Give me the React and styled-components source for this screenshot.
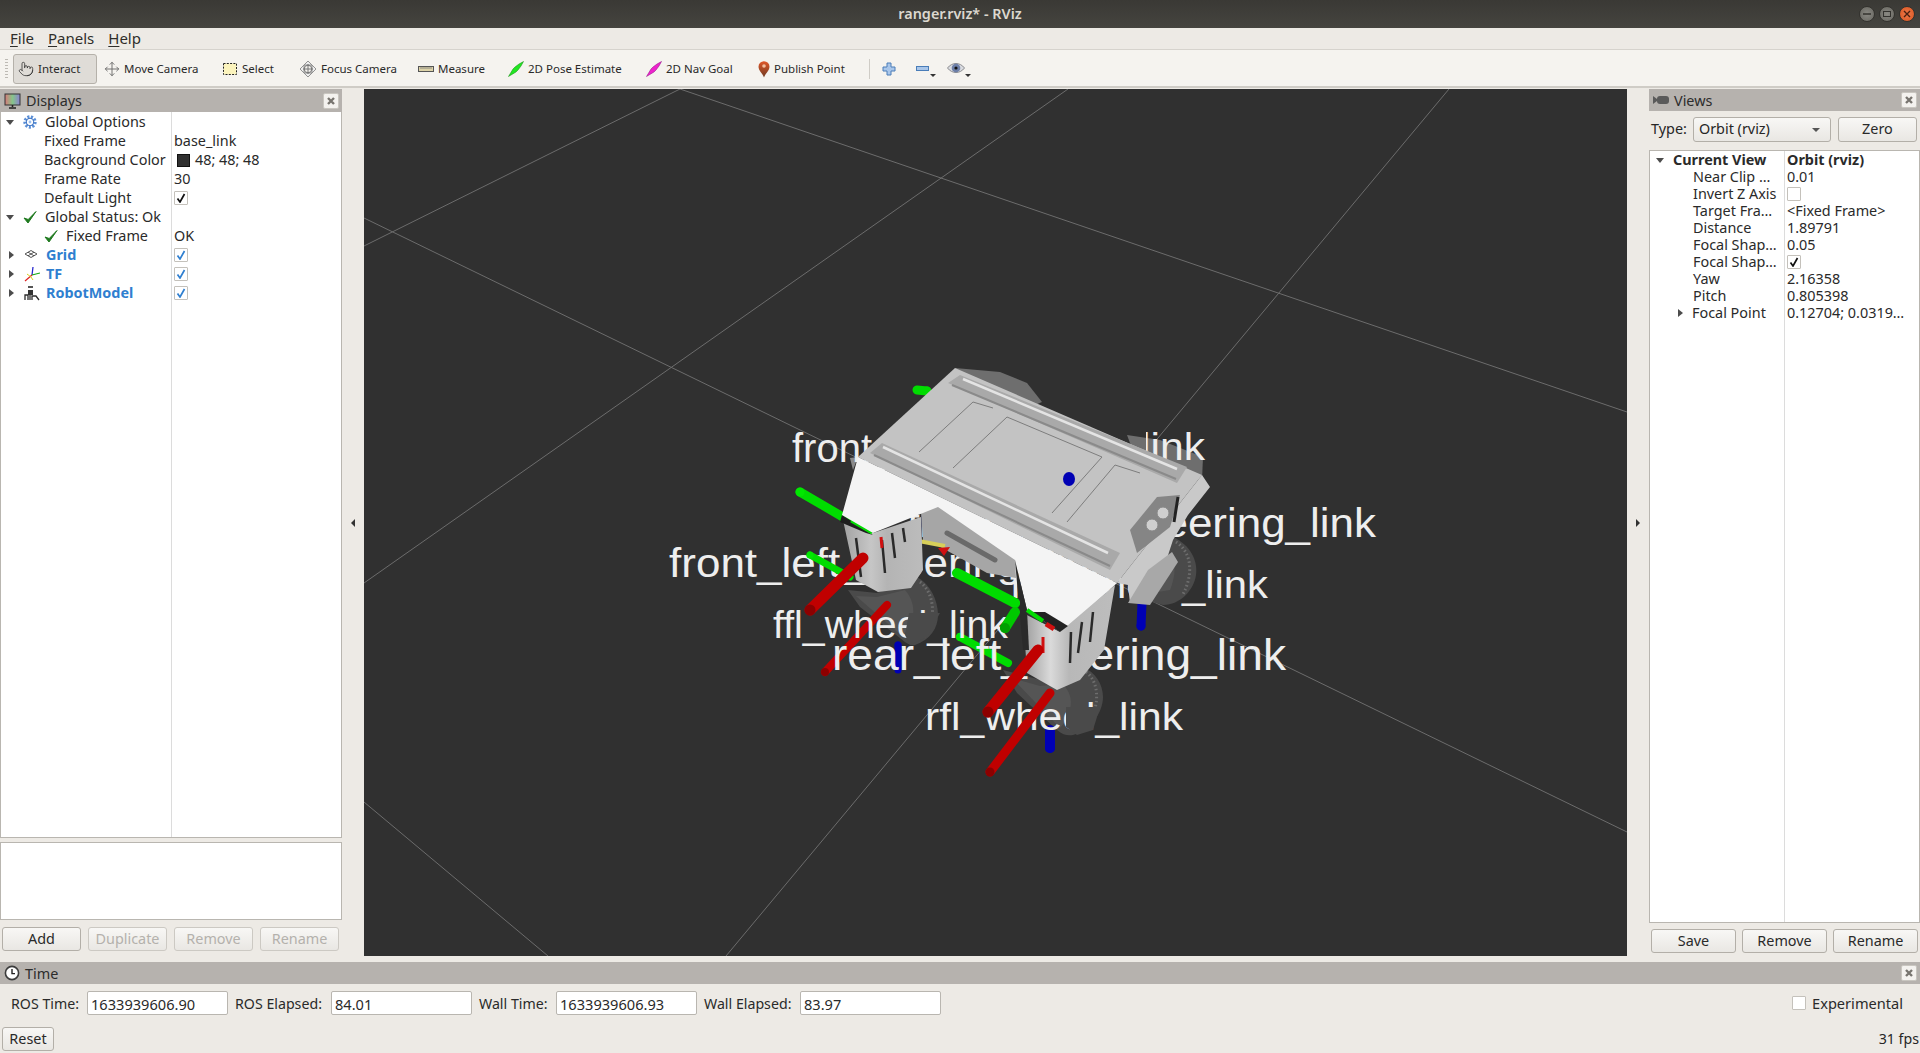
import React from "react";
import styled, { createGlobalStyle } from "styled-components";
import { Pointer, Move } from "lucide-react";

const UI = `"Noto Sans", "Open Sans", sans-serif`;
const Global = createGlobalStyle`
  html, body { margin: 0; padding: 0; height: 100%; overflow: hidden; background: #edeae5; }
  * { box-sizing: border-box; }
`;
const Page = styled.div`
  width: 1920px; height: 1053px; display: flex; flex-direction: column;
  background: #edeae5; color: #262626; font: 14.4px/1 ${UI}; overflow: hidden;
`;
const TitleBar = styled.header`
  height: 28px; flex: none; display: flex; align-items: center; justify-content: center; position: relative;
  background: linear-gradient(#3a3935, #45443f);
  color: #dcd8cf; font-weight: 600; font-size: 14.4px;
`;
const WinButtons = styled.div`
  position: absolute; right: 5px; top: 6px; display: flex; gap: 4px;
`;
const WinBtn = styled.div`
  width: 16px; height: 16px; border-radius: 50%; display: flex; align-items: center; justify-content: center;
  background: ${p => p.$close ? "radial-gradient(#ef7a4c, #d9541e)" : "radial-gradient(#8a8983, #66655f)"};
  border: 1px solid #33322e;
`;
const MenuBar = styled.nav`
  height: 22px; flex: none; display: flex; align-items: center; padding: 0 0 0 10px; gap: 14px;
  font-size: 15px; color: #2f2e2a; border-bottom: 1px solid #d6d3cd;
  u { text-underline-offset: 2px; }
`;
const Toolbar = styled.div`
  height: 38px; flex: none; display: flex; align-items: center; padding: 2px 0 0 5px;
  background: #f5f3ef; border-bottom: 2px solid #cfccc6; font-size: 11.5px; color: #2a2a2a;
`;
const Grip = styled.div`
  width: 3px; height: 20px; margin-right: 5px;
  background: repeating-linear-gradient(#bdbab4 0 1px, transparent 1px 3px);
`;
const ToolBtn = styled.div`
  width: ${p => p.$w}px; height: 30px; flex: none; display: flex; align-items: center; gap: 4px; padding-left: ${p => p.$active ? 4 : 6}px;
  margin-right: ${p => p.$active ? 1 : 0}px;
  ${p => p.$active && `background:#dfdcd7; border:1px solid #b5b1aa; border-radius:3px;`}
`;
const ToolSep = styled.div`
  width: 1px; height: 20px; background: #cfccc6; margin: 0 12px 0 7px;
`;
const IconBtn = styled.div`
  width: ${p => p.$w}px; height: 30px; display: flex; align-items: center;
`;
const Main = styled.main`
  height: 874px; flex: none; display: flex;
`;
const LeftDock = styled.section`
  width: 342px; flex: none; display: flex; flex-direction: column; padding: 1px 0 11px;
`;
const RightDock = styled.section`
  width: 271px; flex: none; display: flex; flex-direction: column; padding-top: 1px;
`;
const DockHead = styled.div`
  height: ${p => p.$h || 23}px; flex: none; display: flex; align-items: center; background: #b6b2ae; padding: 0 3px 0 4px; gap: 5px;
  font-size: 14.4px; color: #2c2c2c;
`;
const DockTitle = styled.span` padding-top: 2px; `;
const CloseBtn = styled.div`
  margin-left: auto; width: 16px; height: 16px; background: #f4f2ef; border: 1px solid #c9c6c0; border-radius: 2px;
  display: flex; align-items: center; justify-content: center;
`;
const Tree = styled.div`
  flex: ${p => p.$fill ? 1 : "none"}; min-height: 0;
  border: 1px solid #b9b6b0; border-top: ${p => p.$noTop ? 0 : "1px solid #b9b6b0"};
  background: linear-gradient(#dcdcdc, #dcdcdc) no-repeat ${p => p.$split}px 0 / 1px 100%, #fff;
`;
const Row = styled.div`
  height: ${p => p.$h}px; display: flex; align-items: center; font-size: 14.4px;
  color: ${p => p.$blue ? "#2f7fd0" : "#2a2a2a"}; font-weight: ${p => p.$blue ? 700 : 400};
`;
const NameCell = styled.div`
  width: ${p => p.$w}px; flex: none; display: flex; align-items: center; padding: 1px 0 0 ${p => p.$indent}px; white-space: nowrap;
  font-weight: ${p => p.$bold ? 700 : "inherit"};
`;
const Twist = styled.span`
  width: 0; height: 0; flex: none; margin-right: ${p => p.$mr}px;
  ${p => p.$open
    ? `border-left:4.5px solid transparent;border-right:4.5px solid transparent;border-top:5px solid #4c4c4c;`
    : `border-top:4.5px solid transparent;border-bottom:4.5px solid transparent;border-left:5px solid #4c4c4c;margin-left:2px;`}
`;
const Spacer = styled.span` width: ${p => p.$w}px; flex: none; `;
const ValueCell = styled.div`
  display: flex; align-items: center; gap: 5px; padding: 1px 0 0 ${p => p.$pad}px; white-space: nowrap;
  color: #2a2a2a; font-weight: ${p => p.$bold ? 700 : 400};
`;
const Check = styled.span`
  width: 14px; height: 14px; flex: none; background: #fff; border: 1px solid #c4c1bb; border-radius: 1px;
  display: flex; align-items: center; justify-content: center;
`;
const Swatch = styled.span`
  width: 13px; height: 13px; background: #303030; border: 1px solid #111; margin-left: 3px;
`;
const Splitter = styled.div` height: 4px; flex: none; `;
const DescBox = styled.div`
  height: 78px; flex: none; background: #fff; border: 1px solid #b9b6b0;
`;
const BtnRow = styled.div`
  display: flex; gap: ${p => p.$gap}px; padding: ${p => p.$pad}; flex: none;
`;
const Btn = styled.div`
  width: ${p => p.$w}px; height: ${p => p.$h || 24}px; flex: none; display: flex; align-items: center; justify-content: center;
  border: 1px solid ${p => p.$off ? "#ccc9c3" : "#b3afa8"}; border-radius: 3px; font-size: 14.4px;
  background: linear-gradient(#f8f7f5, #e9e7e3); color: ${p => p.$off ? "#b4b1ac" : "#2a2a2a"};
`;
const Gutter = styled.div`
  width: 22px; flex: none; display: flex; align-items: center; justify-content: center; padding-bottom: 4px;
`;
const Arrow = styled.span`
  width: 0; height: 0; border-top: 4px solid transparent; border-bottom: 4px solid transparent;
  ${p => p.$left ? "border-right:4px solid #333;" : "border-left:4px solid #333;"}
`;
const ViewportWrap = styled.div`
  width: 1263px; flex: none; margin: 1px 0 6px; background: #303030; overflow: hidden;
`;
const Scene = styled.svg` display: block; width: 100%; height: 100%; `;
const Label = styled.text`
  font-family: "Liberation Sans", Arial, sans-serif; fill: #eeeeee;
`;
const TypeRow = styled.div`
  height: 39px; flex: none; display: flex; align-items: center; font-size: 14.4px; padding: 0 0 2px 2px;
`;
const Combo = styled.div`
  width: 138px; height: 25px; margin: 0 7px 0 6px; display: flex; align-items: center; justify-content: space-between; padding: 0 10px 0 5px;
  border: 1px solid #b3afa8; border-radius: 3px; background: linear-gradient(#f8f7f5, #e9e7e3);
`;
const ComboArrow = styled.span`
  width: 0; height: 0; border-left: 4px solid transparent; border-right: 4px solid transparent; border-top: 4px solid #555;
`;
const TimePanel = styled.section`
  height: 91px; flex: none; display: flex; flex-direction: column;
`;
const TimeFields = styled.div`
  display: flex; align-items: center; height: 24px; margin-top: 7px; padding-left: 11px; font-size: 14.2px; color: #2a2a2a;
`;
const FieldLabel = styled.span`
  width: ${p => p.$w}px; flex: none; white-space: nowrap; padding-top: 2px;
`;
const Field = styled.div`
  width: 141px; height: 24px; flex: none; margin-right: 7px; background: #fff; border: 1px solid #b9b6b0; border-radius: 2px;
  display: flex; align-items: center; padding: 2px 0 0 3px; font-size: 14.6px;
`;
const Experimental = styled.div`
  margin-left: auto; display: flex; align-items: center; gap: 6px; padding-right: 17px; font-size: 14.6px;
`;
const Footer = styled.div`
  display: flex; align-items: center; justify-content: space-between; height: 24px; margin-top: 12px; padding: 0 1px 0 2px; font-size: 14.2px;
`;

const Svg = ({ s = 16, w, children }) => (
  <svg width={w || s} height={s} viewBox={`0 0 ${w || s} ${s}`} style={{ flex: "none" }}>{children}</svg>
);
const CheckMark = ({ c = "#111" }) => (
  <svg width="10" height="10" viewBox="0 0 10 10"><path d="M1.5 5.5 L4 9 L8.5 1" fill="none" stroke={c} strokeWidth="1.7" /></svg>
);
const Tick = () => (
  <Svg s={14}><path d="M1 8 L5 13 L13 1.5 L5.2 9.5 Z" fill="#1f7a1f" stroke="#1f7a1f" strokeWidth="1" /></Svg>
);
const X = () => (
  <svg width="10" height="10" viewBox="0 0 10 10"><path d="M2 2 L8 8 M8 2 L2 8" stroke="#77746f" strokeWidth="2.4" /></svg>
);
const Gear = () => (
  <Svg s={14}>
    <circle cx="7" cy="7" r="5" fill="none" stroke="#5b8fd6" strokeWidth="3.4" strokeDasharray="2 1.4" />
    <circle cx="7" cy="7" r="3.8" fill="none" stroke="#3f74c2" strokeWidth="1" />
    <circle cx="7" cy="7" r="1.4" fill="#9cc0ee" />
  </Svg>
);
const GridIcon = () => (
  <Svg s={14}>
    <path d="M1 6 L7 2.5 L13 6 L7 9.5 Z M4 4.2 L10 7.8 M10 4.2 L4 7.8" fill="none" stroke="#555" strokeWidth="1" />
  </Svg>
);
const TfIcon = () => (
  <Svg s={16}>
    <path d="M8 9 L9 1" stroke="#2222cc" strokeWidth="1.2" />
    <path d="M8 9 L16 7" stroke="#11aa11" strokeWidth="1.2" />
    <path d="M8 9 L1 15" stroke="#dd2222" strokeWidth="1.2" />
    <path d="M3 8 L7 11 L9 14" stroke="#d8d022" strokeWidth="1" fill="none" />
  </Svg>
);
const RobotIcon = () => (
  <Svg s={16}>
    <rect x="4" y="1" width="5" height="2" fill="#555" />
    <rect x="4" y="5" width="5" height="5" fill="#333" />
    <path d="M1 15 V10 H4 V15 M6 15 V10 M8 15 V11 H12 L15 15" fill="none" stroke="#2c2c2c" strokeWidth="1.3" />
  </Svg>
);
const Monitor = () => (
  <svg width="17" height="16" viewBox="0 0 17 16" style={{ flex: "none" }}>
    <defs><linearGradient id="mon" x1="0" x2="1"><stop offset="0" stopColor="#d77a7a" /><stop offset=".5" stopColor="#86c48a" /><stop offset="1" stopColor="#8a82d0" /></linearGradient></defs>
    <rect x="1" y="1" width="15" height="11" fill="url(#mon)" stroke="#333" />
    <path d="M8.5 12 V14 M5 15 H12" stroke="#222" strokeWidth="1.6" />
  </svg>
);
const CamIcon = () => (
  <svg width="16" height="12" viewBox="0 0 16 12" style={{ flex: "none" }}>
    <path d="M0 2 L4 5 V7 L0 10 Z" fill="#5a5a5a" /><rect x="4" y="2" width="12" height="8" rx="3" fill="#5a5a5a" />
  </svg>
);
const Clock = () => (
  <Svg s={16}>
    <circle cx="8" cy="8" r="6.6" fill="#fff" stroke="#3c3c3c" strokeWidth="1.6" />
    <path d="M8 4 V8.6 H11" fill="none" stroke="#222" strokeWidth="1.4" />
  </Svg>
);
const SelectIcon = () => (
  <Svg s={16}><rect x="1.5" y="2.5" width="13" height="11" fill="#fbf3bc" stroke="#222" strokeDasharray="2 1.3" /></Svg>
);
const FocusIcon = () => (
  <Svg s={18}>
    <path d="M9 1 L13 5 H5 Z M9 17 L13 13 H5 Z M1 9 L5 5 V13 Z M17 9 L13 5 V13 Z" fill="#eee" stroke="#888" strokeWidth=".9" />
    <circle cx="9" cy="9" r="3.8" fill="none" stroke="#777" />
    <path d="M9 4 V14 M4 9 H14" stroke="#777" />
  </Svg>
);
const RulerIcon = () => (
  <Svg s={16}>
    <rect x="0.5" y="5.5" width="15" height="5" fill="#ddd3a8" stroke="#555" />
    <path d="M3 6 V8 M5 6 V8 M7 6 V8 M9 6 V8 M11 6 V8 M13 6 V8" stroke="#777" strokeWidth=".8" />
  </Svg>
);
const ArrowIcon = ({ c, d }) => (
  <Svg s={16}>
    <path d="M0.5 15.5 L5 8 L7 6 L11 3 L15.5 0.5 L13 5 L10 9 L8 11 Z" fill={c} stroke={d} strokeWidth=".5" />
  </Svg>
);
const PinIcon = () => (
  <svg width="12" height="17" viewBox="0 0 12 17" style={{ flex: "none" }}>
    <defs><linearGradient id="pin" x1="0" x2="0" y1="0" y2="1"><stop offset="0" stopColor="#e0582a" /><stop offset="1" stopColor="#6e3a22" /></linearGradient></defs>
    <path d="M6 16.5 C4.5 12 .5 9.5 .5 5.7 A5.5 5.5 0 0 1 11.5 5.7 C11.5 9.5 7.5 12 6 16.5 Z" fill="url(#pin)" />
    <circle cx="6" cy="5" r="1.8" fill="#f3c0a0" />
  </svg>
);
const PlusIcon = () => (
  <Svg s={14}><path d="M5 1 H9 V5 H13 V9 H9 V13 H5 V9 H1 V5 H5 Z" fill="#a9c6ea" stroke="#4a7db8" /></Svg>
);
const DropTri = () => <path d="M0 0 H6 L3 3 Z" fill="#333" />;
const MinusIcon = () => (
  <svg width="21" height="20" viewBox="0 0 21 20" style={{ flex: "none" }}>
    <rect x="0.5" y="7.5" width="12" height="4" fill="#a9c6ea" stroke="#4a7db8" />
    <g transform="translate(14 15)"><DropTri /></g>
  </svg>
);
const EyeIcon = () => (
  <svg width="26" height="20" viewBox="0 0 26 20" style={{ flex: "none" }}>
    <path d="M0.5 9 C5 3 13 3 17.5 9 C13 15 5 15 0.5 9 Z" fill="#d9dbe0" stroke="#8c8c90" />
    <circle cx="9" cy="9" r="4.3" fill="#6d7fa8" /><circle cx="9" cy="9" r="1.6" fill="#111" />
    <g transform="translate(18 15)"><DropTri /></g>
  </svg>
);

const toolItems = [
  { t: "Move Camera", w: 118, i: <Move size={16} color="#6b6b6b" strokeWidth={1.4} /> },
  { t: "Select", w: 77, i: <SelectIcon /> },
  { t: "Focus Camera", w: 119, i: <FocusIcon /> },
  { t: "Measure", w: 90, i: <RulerIcon /> },
  { t: "2D Pose Estimate", w: 138, i: <ArrowIcon c="#22e622" d="#0a8a0a" /> },
  { t: "2D Nav Goal", w: 112, i: <ArrowIcon c="#ee22cc" d="#8a0a80" /> },
  { t: "Publish Point", w: 110, i: <PinIcon /> },
];

const displayRows = [
  { n: "Global Options", ind: 5, open: true, icon: <Gear />, gap: 8 },
  { n: "Fixed Frame", ind: 43, v: "base_link" },
  { n: "Background Color", ind: 43, v: "48; 48; 48", swatch: true },
  { n: "Frame Rate", ind: 43, v: "30" },
  { n: "Default Light", ind: 43, c: "#111" },
  { n: "Global Status: Ok", ind: 5, open: true, icon: <Tick />, gap: 8 },
  { n: "Fixed Frame", ind: 43, icon: <Tick />, gap: 8, v: "OK" },
  { n: "Grid", ind: 6, closed: true, icon: <GridIcon />, gap: 8, blue: true, c: "#2f7fd0" },
  { n: "TF", ind: 6, closed: true, icon: <TfIcon />, gap: 6, blue: true, c: "#2f7fd0" },
  { n: "RobotModel", ind: 6, closed: true, icon: <RobotIcon />, gap: 6, blue: true, c: "#2f7fd0" },
];
const viewRows = [
  ["Near Clip …", "0.01"], ["Invert Z Axis", null, "off"], ["Target Fra…", "<Fixed Frame>"], ["Distance", "1.89791"],
  ["Focal Shap…", "0.05"], ["Focal Shap…", null, "on"], ["Yaw", "2.16358"], ["Pitch", "0.805398"],
];

const Rod = ({ x1, y1, x2, y2, w, c, e }) => (
  <g>
    <line x1={x1} y1={y1} x2={x2} y2={y2} stroke={c} strokeWidth={w} strokeLinecap="round" />
    <circle cx={x2} cy={y2} r={w / 2} fill={e} />
  </g>
);
const Tire = ({ d, rim, tread }) => (
  <g>
    <path d={d} fill="#4a4a4a" />
    <path d={rim} fill="#555" />
    <path d={tread} fill="none" stroke="#6e6e6e" strokeWidth="3" strokeDasharray="1.5 2.5" />
  </g>
);

const Robot3D = () => (
  <Scene viewBox="364 89 1263 867" preserveAspectRatio="none">
    <defs>
      <linearGradient id="legA" x1="0" x2="1"><stop offset="0" stopColor="#a2a2a2" /><stop offset=".35" stopColor="#c6c6c6" /><stop offset=".55" stopColor="#b4b4b4" /><stop offset="1" stopColor="#bcbcbc" /></linearGradient>
      <linearGradient id="legB" x1="0" x2="1"><stop offset="0" stopColor="#9a9a9a" /><stop offset=".3" stopColor="#dadada" /><stop offset=".5" stopColor="#b8b8b8" /><stop offset="1" stopColor="#bdbdbd" /></linearGradient>
      <clipPath id="topLinkClip"><rect x="1146" y="400" width="100" height="90" /></clipPath>
    </defs>
    <g stroke="#6c6c6c" strokeWidth="1" fill="none">
      <line x1="364" y1="218" x2="1627" y2="832" />
      <line x1="680" y1="89" x2="364" y2="246" />
      <line x1="680" y1="89" x2="1627" y2="412" />
      <line x1="1068" y1="89" x2="364" y2="583" />
      <line x1="1449" y1="89" x2="726" y2="956" />
      <line x1="364" y1="802" x2="548" y2="956" />
    </g>
    <path d="M955 368 L1000 372 L1027 383 L1042 402 L1000 420 Z" fill="#6e6e6e" />
    <path d="M1127 435 L1160 440 L1203 457 L1202 480 L1140 470 Z" fill="#6e6e6e" />
    <polygon points="850,458 858,457 853,470" fill="#8a8a8a" />
    <Label x="792" y="462" fontSize="40">front_left_link</Label>
    <Label x="947" y="460" fontSize="38" textLength="258" lengthAdjust="spacingAndGlyphs" clipPath="url(#topLinkClip)">frl_wheel_link</Label>
    <Label x="907" y="537" fontSize="40" textLength="469" lengthAdjust="spacingAndGlyphs">front_right_steering_link</Label>
    <Label x="1010" y="598" fontSize="38" textLength="258" lengthAdjust="spacingAndGlyphs">frr_wheel_link</Label>
    <Label x="669" y="577" fontSize="40" textLength="443" lengthAdjust="spacingAndGlyphs">front_left_steering_link</Label>

    <Tire
      d="M1173 537 C1190 545 1198 560 1196 575 C1194 590 1180 605 1163 605 L1134 597 Z"
      rim="M1160 550 C1172 550 1180 565 1170 590 L1140 595 Z"
      tread="M1176 542 C1192 552 1194 575 1182 596"
    />
    <Tire
      d="M848 590 L860 607 L900 638 C906 643 910 646 915 645 C930 640 938 628 938 615 C938 600 930 584 917 577 L877 593 Z"
      rim="M856 596 L902 636 C915 625 918 605 905 590 L877 597 Z"
      tread="M920 582 C934 592 937 618 925 636"
    />
    <Tire
      d="M1003 670 L1017 693 L1057 730 C1063 735 1068 736 1073 735 C1090 730 1103 713 1103 697 C1103 684 1095 672 1083 667 L1053 683 Z"
      rim="M1012 678 L1060 728 C1072 715 1076 695 1062 684 L1040 686 Z"
      tread="M1086 672 C1100 682 1100 708 1087 725"
    />

    <Rod x1={917} y1={390} x2={927} y2={391} w={9} c="#00dc00" e="#00dc00" />
    <Rod x1={860} y1={527} x2={800} y2={492} w={9} c="#00dc00" e="#00e800" />
    <Rod x1={850} y1={577} x2={810} y2={555} w={7} c="#00dc00" e="#00e800" />
    <Rod x1={898} y1={670} x2={898} y2={645} w={7} c="#0000b4" e="#0000b4" />
    <Rod x1={1008} y1={663} x2={960} y2={637} w={8} c="#00dc00" e="#00e800" />
    <Rod x1={1050} y1={730} x2={1050} y2={748} w={10} c="#0000b4" e="#0000b4" />
    <Rod x1={1142} y1={603} x2={1141} y2={626} w={9} c="#0000b4" e="#0000b4" />

    <Rod x1={887} y1={605} x2={825} y2={672} w={8} c="#c00000" e="#8c0000" />
    <Label x="773" y="638" fontSize="38" textLength="235" lengthAdjust="spacingAndGlyphs">ffl_wheel_link</Label>
    <path d="M909 613 L940 613 L927 637 L910 645 L905 635 Z" fill="#4a4a4a" />
    <Label x="832" y="670" fontSize="45" textLength="454" lengthAdjust="spacingAndGlyphs">rear_left_steering_link</Label>
    <Label x="925" y="730" fontSize="38" textLength="258" lengthAdjust="spacingAndGlyphs">rfl_wheel_link</Label>
    <path d="M1066 707 L1100 707 L1093 730 L1077 735 L1066 727 Z" fill="#4a4a4a" />

    <polygon points="955,368 858,457 1117,583 1202,475" fill="#c3c3c3" />
    <polygon points="870,453 882,443 1120,553 1110,570" fill="#a9a9a9" />
    <polygon points="948,383 960,375 1187,467 1177,483" fill="#a9a9a9" />
    <g fill="none" stroke="#e4e4e4" strokeWidth="2.5">
      <line x1="883" y1="447" x2="1108" y2="553" />
      <line x1="963" y1="379" x2="1177" y2="469" />
    </g>
    <g fill="none" stroke="#8a8a8a" strokeWidth="2">
      <line x1="874" y1="455" x2="1110" y2="566" />
      <line x1="952" y1="385" x2="1176" y2="479" />
    </g>
    <g fill="none" stroke="#7d7d7d" strokeWidth="1">
      <polyline points="919,452 973,402 993,408" />
      <polyline points="953,468 1007,417 1102,457 1052,513" />
      <polyline points="1067,522 1115,465 1140,473" />
    </g>
    <ellipse cx="1069" cy="479" rx="6" ry="7" fill="#0000b4" />

    <polygon points="1202,475 1210,487 1188,515 1173,540 1155,595 1130,603 1128,585 1117,583" fill="#c9c9c9" />
    <polygon points="1130,530 1157,497 1180,495 1170,527 1137,553" fill="#858585" />
    <line x1="1178" y1="497" x2="1174" y2="522" stroke="#222" strokeWidth="3" />
    <circle cx="1163" cy="513" r="6" fill="#cfcfcf" stroke="#888" />
    <circle cx="1152" cy="525" r="6" fill="#cfcfcf" stroke="#888" />
    <polygon points="1148,570 1172,552 1178,562 1150,605 1128,603" fill="#a8a8a8" />

    <polygon points="921,512 938,505 1015,558 1016,578 987,573 937,545 923,540" fill="#a6a6a6" />
    <line x1="947" y1="533" x2="995" y2="560" stroke="#6a6a6a" strokeWidth="5" strokeLinecap="round" />
    <line x1="903" y1="538" x2="945" y2="546" stroke="#d8cf5a" strokeWidth="4" />
    <polygon points="938,548 950,547 944,556" fill="#d01010" />

    <polygon points="843,520 856,580 878,592 911,588 923,570 921,517 873,533" fill="url(#legA)" />
    <g stroke="#2a2a2a" strokeWidth="2.5">
      <line x1="856" y1="538" x2="861" y2="577" />
      <line x1="882" y1="540" x2="885" y2="573" />
      <line x1="892" y1="533" x2="895" y2="558" />
      <line x1="903" y1="528" x2="905" y2="542" />
    </g>
    <line x1="881" y1="537" x2="882" y2="548" stroke="#d01010" strokeWidth="3" />
    <polygon points="842,515 873,535 866,533 840,522" fill="#1e1e1e" />
    <line x1="851" y1="521" x2="872" y2="533" stroke="#00dc00" strokeWidth="3" />

    <polygon points="858,457 842,515 873,533 938,507 1015,560 1027,610 1062,633 1117,583" fill="#f4f4f4" />
    <polygon points="1023,613 1060,632 1115,585 1104,650 1080,680 1057,690 1027,673" fill="url(#legB)" />
    <polygon points="1015,560 1023,650 1029,650 1027,610" fill="#2a2a2a" />
    <polygon points="1030,612 1060,632 1068,626 1045,612" fill="#222" />
    <line x1="1027" y1="610" x2="1043" y2="621" stroke="#00dc00" strokeWidth="4" />
    <line x1="1046" y1="624" x2="1054" y2="629" stroke="#d01010" strokeWidth="5" />
    <g stroke="#2a2a2a" strokeWidth="2.5">
      <line x1="1071" y1="632" x2="1070" y2="663" />
      <line x1="1082" y1="622" x2="1078" y2="653" />
      <line x1="1093" y1="612" x2="1090" y2="642" />
    </g>
    <line x1="1043" y1="637" x2="1043" y2="653" stroke="#d01010" strokeWidth="3" />

    <Rod x1={957} y1={573} x2={1015} y2={603} w={10} c="#00dc00" e="#00dc00" />
    <Rod x1={1015} y1={612} x2={1005} y2={628} w={10} c="#00c800" e="#00a000" />
    <Rod x1={863} y1={558} x2={810} y2={610} w={11} c="#c00000" e="#8c0000" />
    <Rod x1={1038} y1={650} x2={988} y2={712} w={11} c="#c00000" e="#8c0000" />
    <Rod x1={1050} y1={693} x2={990} y2={772} w={9} c="#c00000" e="#8c0000" />
  </Scene>
);

export default function App() {
  return (
    <Page>
      <Global />
      <TitleBar>
        ranger.rviz* - RViz
        <WinButtons>
          <WinBtn><svg width="8" height="8"><path d="M0 4 H8" stroke="#33322e" strokeWidth="1.5" /></svg></WinBtn>
          <WinBtn><svg width="8" height="8"><rect x=".5" y="1.5" width="7" height="5" fill="none" stroke="#33322e" /></svg></WinBtn>
          <WinBtn $close><svg width="8" height="8"><path d="M1 1 L7 7 M7 1 L1 7" stroke="#4a2010" strokeWidth="1.4" /></svg></WinBtn>
        </WinButtons>
      </TitleBar>
      <MenuBar>
        <span><u>F</u>ile</span><span><u>P</u>anels</span><span><u>H</u>elp</span>
      </MenuBar>
      <Toolbar>
        <Grip />
        <ToolBtn $w={84} $active><Pointer size={16} color="#333" strokeWidth={1.2} />Interact</ToolBtn>
        {toolItems.map(t => <ToolBtn key={t.t} $w={t.w}>{t.i}{t.t}</ToolBtn>)}
        <ToolSep />
        <IconBtn $w={34}><PlusIcon /></IconBtn>
        <IconBtn $w={31}><MinusIcon /></IconBtn>
        <IconBtn $w={28}><EyeIcon /></IconBtn>
      </Toolbar>
      <Main>
        <LeftDock>
          <DockHead><Monitor /><DockTitle>Displays</DockTitle><CloseBtn><X /></CloseBtn></DockHead>
          <Tree $fill $noTop $split={170}>
            {displayRows.map((r, i) => (
              <Row key={i} $h={19} $blue={r.blue}>
                <NameCell $w={170} $indent={r.ind}>
                  {r.open && <Twist $open $mr={9} />}
                  {r.closed && <Twist $mr={10} />}
                  {r.icon}
                  {r.icon && <Spacer $w={r.gap} />}
                  {r.n}
                </NameCell>
                <ValueCell $pad={3}>
                  {r.swatch && <Swatch />}
                  {r.v}
                  {r.c && <Check><CheckMark c={r.c} /></Check>}
                </ValueCell>
              </Row>
            ))}
          </Tree>
          <Splitter />
          <DescBox />
          <BtnRow $gap={7} $pad="7px 3px 0 2px">
            <Btn $w={79}>Add</Btn>
            <Btn $w={79} $off>Duplicate</Btn>
            <Btn $w={79} $off>Remove</Btn>
            <Btn $w={79} $off>Rename</Btn>
          </BtnRow>
        </LeftDock>
        <Gutter><Arrow $left /></Gutter>
        <ViewportWrap><Robot3D /></ViewportWrap>
        <Gutter><Arrow /></Gutter>
        <RightDock>
          <DockHead $h={22}><CamIcon /><DockTitle>Views</DockTitle><CloseBtn><X /></CloseBtn></DockHead>
          <TypeRow>
            Type:
            <Combo>Orbit (rviz)<ComboArrow /></Combo>
            <Btn $w={79} $h={25}>Zero</Btn>
          </TypeRow>
          <Tree $fill $split={134}>
            <Row $h={17}>
              <NameCell $w={134} $indent={6} $bold><Twist $open $mr={9} />Current View</NameCell>
              <ValueCell $pad={3} $bold>Orbit (rviz)</ValueCell>
            </Row>
            {viewRows.map((r, i) => (
              <Row key={i} $h={17}>
                <NameCell $w={134} $indent={43}>{r[0]}</NameCell>
                <ValueCell $pad={3}>
                  {r[1]}
                  {r[2] && <Check>{r[2] === "on" && <CheckMark />}</Check>}
                </ValueCell>
              </Row>
            ))}
            <Row $h={17}>
              <NameCell $w={134} $indent={26}><Twist $mr={9} />Focal Point</NameCell>
              <ValueCell $pad={3}>0.12704; 0.0319…</ValueCell>
            </Row>
          </Tree>
          <BtnRow $gap={6} $pad="6px 2px 9px 2px">
            <Btn $w={85}>Save</Btn>
            <Btn $w={85}>Remove</Btn>
            <Btn $w={85}>Rename</Btn>
          </BtnRow>
        </RightDock>
      </Main>
      <TimePanel>
        <DockHead $h={22}><Clock /><DockTitle>Time</DockTitle><CloseBtn><X /></CloseBtn></DockHead>
        <TimeFields>
          <FieldLabel $w={76}>ROS Time:</FieldLabel><Field>1633939606.90</Field>
          <FieldLabel $w={96}>ROS Elapsed:</FieldLabel><Field>84.01</Field>
          <FieldLabel $w={77}>Wall Time:</FieldLabel><Field>1633939606.93</Field>
          <FieldLabel $w={96}>Wall Elapsed:</FieldLabel><Field>83.97</Field>
          <Experimental><Check />Experimental</Experimental>
        </TimeFields>
        <Footer>
          <Btn $w={52}>Reset</Btn>
          <span>31 fps</span>
        </Footer>
      </TimePanel>
    </Page>
  );
}
